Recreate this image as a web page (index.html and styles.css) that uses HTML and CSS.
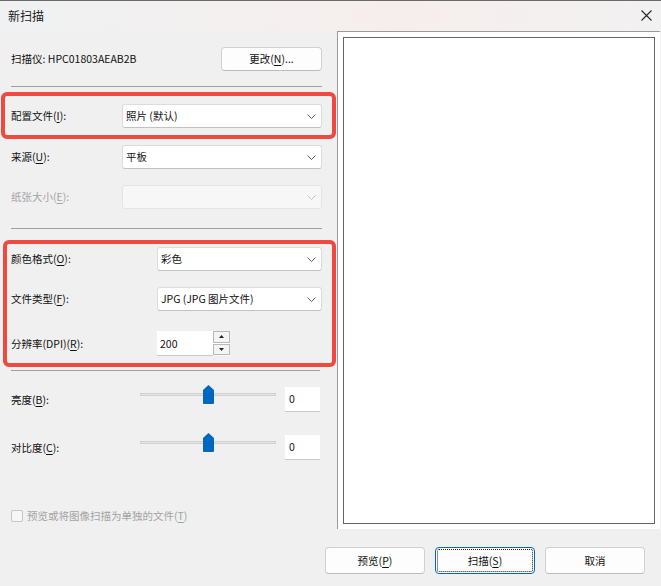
FILE: index.html
```html
<!DOCTYPE html>
<html lang="zh-CN">
<head>
<meta charset="utf-8">
<title>新扫描</title>
<link rel="stylesheet" href="styles.css">
</head>
<body>
<div class="window">
  <div class="titlebar">
    <span class="title">新扫描</span>
    <svg class="close" width="11" height="11" viewBox="0 0 11 11"><path d="M0.5 0.5 L10.5 10.5 M10.5 0.5 L0.5 10.5" stroke="#262626" stroke-width="1.1" fill="none"/></svg>
  </div>
  <div class="main">
    <div class="settings">
      <div class="row row-scanner">
        <span class="label">扫描仪: HPC01803AEAB2B</span>
        <button class="btn btn-change">更改(<u>N</u>)...</button>
      </div>
      <div class="sep sep1"></div>
      <div class="row field r-profile">
        <span class="label lw1">配置文件(<u>I</u>):</span>
        <div class="select w1"><span>照片 (默认)</span><svg class="chev" width="9" height="5" viewBox="0 0 9 5"><path d="M0.5 0.5 L4.5 4.5 L8.5 0.5" stroke="#5f5f5f" fill="none"/></svg></div>
      </div>
      <div class="row field r-source">
        <span class="label lw1">来源(<u>U</u>):</span>
        <div class="select w1"><span>平板</span><svg class="chev" width="9" height="5" viewBox="0 0 9 5"><path d="M0.5 0.5 L4.5 4.5 L8.5 0.5" stroke="#5f5f5f" fill="none"/></svg></div>
      </div>
      <div class="row field r-paper">
        <span class="label lw1 disabled">纸张大小(<u>E</u>):</span>
        <div class="select w1 is-disabled"><span></span><svg class="chev" width="9" height="5" viewBox="0 0 9 5"><path d="M0.5 0.5 L4.5 4.5 L8.5 0.5" stroke="#c4c4c4" fill="none"/></svg></div>
      </div>
      <div class="sep sep2"></div>
      <div class="row field r-color">
        <span class="label lw2">颜色格式(<u>O</u>):</span>
        <div class="select w2"><span>彩色</span><svg class="chev" width="9" height="5" viewBox="0 0 9 5"><path d="M0.5 0.5 L4.5 4.5 L8.5 0.5" stroke="#5f5f5f" fill="none"/></svg></div>
      </div>
      <div class="row field r-type">
        <span class="label lw2">文件类型(<u>F</u>):</span>
        <div class="select w2"><span>JPG (JPG 图片文件)</span><svg class="chev" width="9" height="5" viewBox="0 0 9 5"><path d="M0.5 0.5 L4.5 4.5 L8.5 0.5" stroke="#5f5f5f" fill="none"/></svg></div>
      </div>
      <div class="row r-dpi">
        <span class="label lw2">分辨率(DPI)(<u>R</u>):</span>
        <div class="spin">
          <div class="spin-input">200</div>
          <div class="spin-btns">
            <div class="spin-btn"><svg width="5" height="3" viewBox="0 0 5 3"><path d="M0 3 L2.5 0 L5 3 Z" fill="#222"/></svg></div>
            <div class="spin-btn"><svg width="5" height="3" viewBox="0 0 5 3"><path d="M0 0 L2.5 3 L5 0 Z" fill="#222"/></svg></div>
          </div>
        </div>
      </div>
      <div class="sep sep3"></div>
      <div class="row r-bright">
        <span class="label lw3">亮度(<u>B</u>):</span>
        <div class="slider">
          <div class="track"></div>
          <svg class="thumb" width="11" height="19" viewBox="0 0 11 19"><path d="M0 5 L5.5 0 L11 5 V18 Q11 19 10 19 H1 Q0 19 0 18 Z" fill="#0067c0"/></svg>
        </div>
        <div class="numbox">0</div>
      </div>
      <div class="row r-contrast">
        <span class="label lw3">对比度(<u>C</u>):</span>
        <div class="slider">
          <div class="track"></div>
          <svg class="thumb" width="11" height="19" viewBox="0 0 11 19"><path d="M0 5 L5.5 0 L11 5 V18 Q11 19 10 19 H1 Q0 19 0 18 Z" fill="#0067c0"/></svg>
        </div>
        <div class="numbox">0</div>
      </div>
      <div class="row r-check">
        <span class="checkbox"></span>
        <span class="label disabled">预览或将图像扫描为单独的文件(<u>T</u>)</span>
      </div>
    </div>
    <div class="preview">
      <div class="preview-inner"></div>
    </div>
  </div>
  <div class="footer">
    <button class="btn btn-foot">预览(<u>P</u>)</button>
    <button class="btn btn-foot btn-default"><span class="focus">扫描(<u>S</u>)</span></button>
    <button class="btn btn-foot">取消</button>
  </div>
  <div class="annot annot1"></div>
  <div class="annot annot2"></div>
</div>
</body>
</html>
```

FILE: styles.css
```css
html, body {
  margin: 0;
  padding: 0;
  background: #f0f0f0;
}
body {
  font-family: "Noto Sans CJK SC", "Noto Sans", sans-serif;
  font-size: 10.5px;
  color: #111111;
}
.window {
  position: relative;
  width: 661px;
  height: 586px;
  background: #f0f0f0;
  overflow: hidden;
}
.titlebar {
  height: 30px;
  border-top: 1px solid #6a6a6a;
  background: linear-gradient(90deg, #eff1f2 0%, #f4f0f0 35%, #f6eeed 60%, #f2f1f1 100%);
  display: flex;
  align-items: center;
  padding: 0 9px 0 8px;
}
.title {
  font-size: 12px;
  line-height: 16px;
  color: #1a1a1a;
  margin-top: -1px;
}
.close {
  margin-left: auto;
  margin-top: -1px;
}
.main {
  display: flex;
  height: 499px;
}
.settings {
  width: 337px;
  box-sizing: border-box;
  padding: 16px 15px 0 11px;
  display: flex;
  flex-direction: column;
}
.row {
  display: flex;
  align-items: center;
}
.label {
  line-height: 16px;
  white-space: nowrap;
  flex-shrink: 0;
}
.label u { text-underline-offset: 2px; }
.disabled { color: #a3a3a3; }
.lw1 { width: 111px; }
.lw2 { width: 146px; }
.lw3 { width: 129px; }
.row-scanner { height: 23px; }
.btn {
  font-family: inherit;
  font-size: 10.5px;
  color: #111111;
  background: #fdfdfd;
  border: 1px solid #d0d0d0;
  border-bottom-color: #bcbcbc;
  border-radius: 4px;
  padding: 0;
  box-sizing: border-box;
  display: flex;
  align-items: center;
  justify-content: center;
  line-height: 16px;
}
.btn u { text-underline-offset: 2px; }
.btn-change {
  margin-left: auto;
  width: 101px;
  height: 24px;
}
.sep {
  height: 1px;
  background: #a0a0a0;
}
.sep1 { margin-top: 16px; }
.sep2 { margin-top: 19px; }
.sep3 { margin-top: 14px; margin-right: 2px; }
.field { height: 24px; }
.r-profile { margin-top: 17px; }
.r-source { margin-top: 17px; }
.r-paper { margin-top: 16px; }
.r-color { margin-top: 18px; }
.r-type { margin-top: 16px; }
.select {
  flex: 1;
  height: 24px;
  box-sizing: border-box;
  background: #ffffff;
  border: 1px solid #dcdcdc;
  border-bottom-color: #c2c2c2;
  border-radius: 3px;
  display: flex;
  align-items: center;
  padding: 0 5px 0 3px;
  line-height: 16px;
}
.select.is-disabled {
  background: #f7f7f7;
  border-color: #e4e4e4;
}
.chev { margin-left: auto; }
.r-dpi { margin-top: 20px; height: 25px; }
.spin {
  display: flex;
  height: 25px;
}
.spin-input {
  width: 56px;
  background: #ffffff;
  box-sizing: border-box;
  padding-left: 3px;
  line-height: 25px;
  border-bottom: 1px solid #c8c8c8;
}
.spin-btns {
  width: 17px;
  display: flex;
  flex-direction: column;
  background: #ffffff;
}
.spin-btn {
  height: 12px;
  box-sizing: border-box;
  border: 1px solid #b8b8b8;
  background: #f4f4f4;
  display: flex;
  align-items: center;
  justify-content: center;
  margin: 0 0 1px 0;
}
.r-bright { margin-top: 16px; height: 25px; }
.r-contrast { margin-top: 23px; height: 25px; }
.slider {
  position: relative;
  width: 136px;
  height: 19px;
  transform: translateY(-5px);
}
.track {
  position: absolute;
  left: 0;
  right: 0;
  top: 8px;
  height: 3px;
  box-sizing: border-box;
  background: #e4e4e4;
  border: 1px solid #d2d2d2;
}
.thumb {
  position: absolute;
  left: 63px;
  top: 0;
}
.numbox {
  margin-left: 9px;
  width: 35px;
  height: 25px;
  box-sizing: border-box;
  background: #ffffff;
  border-bottom: 1px solid #c8c8c8;
  padding-left: 4px;
  line-height: 24px;
}
.r-check { margin-top: 48px; height: 16px; }
.checkbox {
  width: 12px;
  height: 12px;
  box-sizing: border-box;
  border: 1px solid #c6c6c6;
  border-radius: 2px;
  background: #f7f7f7;
  margin-right: 4px;
}
.preview {
  width: 323px;
  height: 498px;
  box-sizing: border-box;
  border-top: 1px solid #9a9a9a;
  border-left: 1px solid #9a9a9a;
  background: #ffffff;
  padding: 5px;
  display: flex;
}
.preview-inner {
  flex: 1;
  border: 1px solid #646464;
  background: #ffffff;
}
.footer {
  display: flex;
  justify-content: flex-end;
  gap: 10px;
  padding: 17px 16px 0 0;
}
.btn-foot {
  width: 100px;
  height: 27px;
}
.btn-default {
  border: 1px solid #0067c0;
  padding: 1px;
}
.focus {
  flex: 1;
  align-self: stretch;
  border: 1px dotted #222;
  border-radius: 2px;
  display: flex;
  align-items: center;
  justify-content: center;
}
.annot {
  position: absolute;
  border: 4px solid #ef4a3f;
  border-radius: 6px;
  box-sizing: border-box;
  pointer-events: none;
}
.annot1 {
  left: 1px;
  top: 92px;
  width: 335px;
  height: 47px;
}
.annot2 {
  left: 3px;
  top: 240px;
  width: 333px;
  height: 127px;
}
```
